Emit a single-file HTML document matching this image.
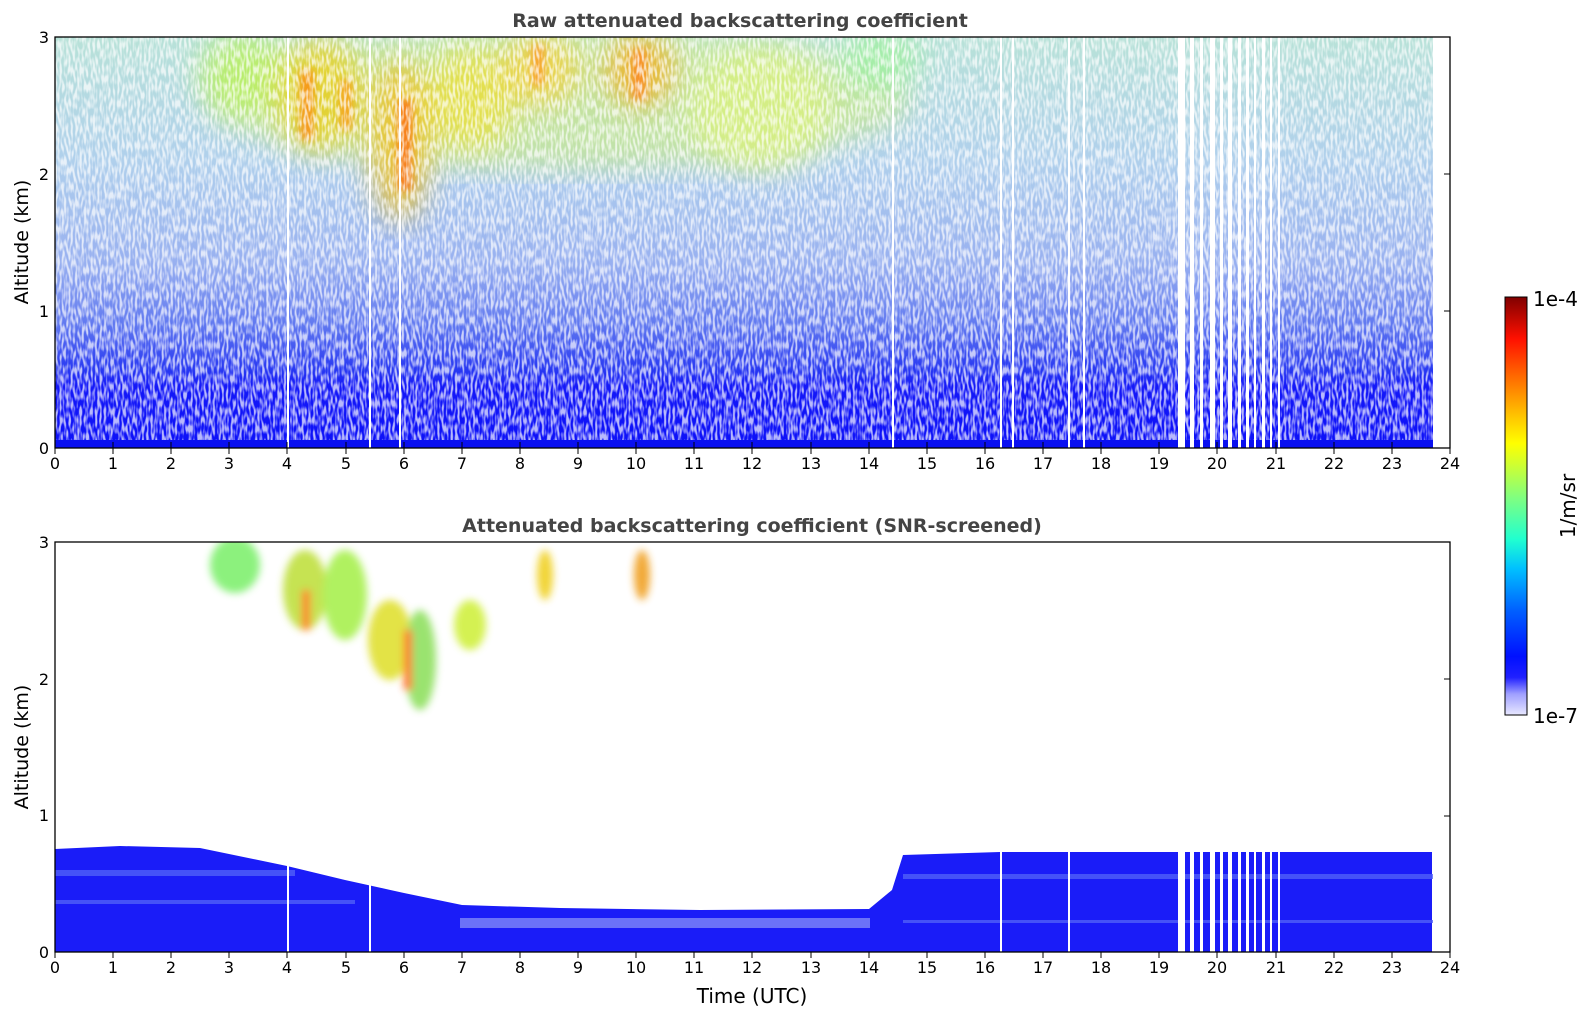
<!DOCTYPE html>
<html><head><meta charset="utf-8"><style>
html,body{margin:0;padding:0;background:#fff;}
svg{display:block;font-family:"DejaVu Sans","Liberation Sans",sans-serif;}
</style></head><body>
<svg width="1595" height="1020" viewBox="0 0 1595 1020" xmlns="http://www.w3.org/2000/svg">
<defs>
<linearGradient id="topbg" x1="0" y1="1" x2="0" y2="0">
<stop offset="0" stop-color="#0c10f8"/>
<stop offset="0.15" stop-color="#1418f8"/>
<stop offset="0.19" stop-color="#2838f2"/>
<stop offset="0.3" stop-color="#6078f0"/>
<stop offset="0.45" stop-color="#98b0f0"/>
<stop offset="0.7" stop-color="#b0d0ec"/>
<stop offset="1" stop-color="#b8e2d8"/>
</linearGradient>
<linearGradient id="cb" x1="0" y1="1" x2="0" y2="0">
<stop offset="0" stop-color="#e8e8ff"/>
<stop offset="0.05" stop-color="#a0a0ff"/>
<stop offset="0.09" stop-color="#2020ff"/>
<stop offset="0.14" stop-color="#0010ff"/>
<stop offset="0.25" stop-color="#0060ff"/>
<stop offset="0.35" stop-color="#00c0ff"/>
<stop offset="0.42" stop-color="#20ffd0"/>
<stop offset="0.52" stop-color="#80ff80"/>
<stop offset="0.6" stop-color="#d0ff30"/>
<stop offset="0.65" stop-color="#ffff00"/>
<stop offset="0.72" stop-color="#ffc000"/>
<stop offset="0.82" stop-color="#ff6000"/>
<stop offset="0.9" stop-color="#ff1000"/>
<stop offset="1" stop-color="#800000"/>
</linearGradient>
<filter id="blur"><feGaussianBlur stdDeviation="14"/></filter>
<filter id="blur2"><feGaussianBlur stdDeviation="4"/></filter>
<filter id="noise" x="0" y="0" width="100%" height="100%">
<feTurbulence type="fractalNoise" baseFrequency="0.45 0.12" numOctaves="1" seed="3"/>
<feColorMatrix type="matrix" values="0 0 0 0 1  0 0 0 0 1  0 0 0 0 1  4 0 0 0 -1.6"/>
</filter>
<clipPath id="ctop"><rect x="55" y="37" width="1378" height="411"/></clipPath>
<clipPath id="cbot"><rect x="55" y="542" width="1378" height="410"/></clipPath>
</defs>

<text x="740" y="27" text-anchor="middle" font-size="19" font-weight="bold" fill="#444">Raw attenuated backscattering coefficient</text>
<g clip-path="url(#ctop)">
<rect x="55" y="37" width="1378" height="411" fill="url(#topbg)"/>
<g filter="url(#blur)" opacity="0.75">
<ellipse cx="560" cy="100" rx="350" ry="70" fill="#c8e890"/>
</g>
<g filter="url(#blur)" opacity="0.85">
<ellipse cx="245" cy="75" rx="45" ry="40" fill="#b8f060"/>
<ellipse cx="320" cy="95" rx="45" ry="55" fill="#e8d020"/>
<ellipse cx="400" cy="140" rx="30" ry="80" fill="#f0c020"/>
<ellipse cx="470" cy="100" rx="45" ry="50" fill="#e8e040"/>
<ellipse cx="540" cy="70" rx="40" ry="35" fill="#f0d040"/>
<ellipse cx="640" cy="70" rx="35" ry="35" fill="#f0b020"/>
<ellipse cx="760" cy="110" rx="70" ry="60" fill="#d8f080"/>
<ellipse cx="880" cy="60" rx="40" ry="30" fill="#a0f0a0"/>
</g>
<g filter="url(#blur2)" opacity="0.7">
<rect x="300" y="70" width="14" height="70" fill="#ff8010"/>
<rect x="340" y="80" width="12" height="50" fill="#ff9010"/>
<rect x="398" y="100" width="14" height="90" fill="#ff6010"/>
<rect x="632" y="50" width="14" height="50" fill="#ff8020"/>
<rect x="532" y="45" width="12" height="40" fill="#ff9020"/>
</g>
<rect x="55" y="37" width="1378" height="411" filter="url(#noise)" opacity="0.7"/>
<rect x="55" y="440" width="1378" height="8" fill="#0a10f0"/>
<rect x="1433" y="37" width="20" height="411" fill="#fff"/>
<g fill="#fff">
<rect x="1178" y="37" width="7" height="411"/><rect x="1190" y="37" width="4" height="411"/>
<rect x="1200" y="37" width="3" height="411"/><rect x="1210" y="37" width="5" height="411"/>
<rect x="1220" y="37" width="3" height="411"/><rect x="1228" y="37" width="4" height="411"/>
<rect x="1238" y="37" width="3" height="411"/><rect x="1246" y="37" width="3" height="411"/>
<rect x="1254" y="37" width="2" height="411"/><rect x="1262" y="37" width="3" height="411"/>
<rect x="1270" y="37" width="2" height="411"/><rect x="1278" y="37" width="2" height="411"/>
<rect x="287" y="37" width="2" height="411"/><rect x="369" y="37" width="2" height="411"/>
<rect x="399" y="37" width="2" height="411"/><rect x="1000" y="37" width="2" height="411"/>
<rect x="1012" y="37" width="2" height="411"/><rect x="1068" y="37" width="2" height="411"/>
<rect x="1083" y="37" width="2" height="411"/><rect x="892" y="37" width="2" height="411"/>
</g>
</g>
<rect x="55" y="37" width="1395" height="411" fill="none" stroke="#000" stroke-width="1.3"/>

<text x="752" y="532" text-anchor="middle" font-size="19" font-weight="bold" fill="#444">Attenuated backscattering coefficient (SNR-screened)</text>
<g clip-path="url(#cbot)">
<polygon points="55,849 120,846 200,848 287,866 345,880 404,893 462,905 560,908 700,910 869,909 892,890 903,855 1000,852 1432,852 1432,952 55,952" fill="#1a1cf8"/>
<g fill="#5060f8" opacity="0.8">
<rect x="55" y="870" width="240" height="6"/><rect x="55" y="900" width="300" height="4"/>
<rect x="903" y="874" width="530" height="5"/><rect x="903" y="920" width="530" height="3"/>
<rect x="460" y="918" width="410" height="10" fill="#8088f8"/>
</g>
<g filter="url(#blur2)" opacity="0.9">
<ellipse cx="235" cy="565" rx="25" ry="28" fill="#80f070"/>
<ellipse cx="305" cy="590" rx="22" ry="40" fill="#c0e040"/>
<ellipse cx="345" cy="595" rx="22" ry="45" fill="#a8f050"/>
<ellipse cx="390" cy="640" rx="22" ry="40" fill="#e0e030"/>
<ellipse cx="420" cy="660" rx="16" ry="50" fill="#90e060"/>
<ellipse cx="470" cy="625" rx="16" ry="25" fill="#d0f040"/>
<ellipse cx="545" cy="575" rx="8" ry="25" fill="#f0d020"/>
<ellipse cx="642" cy="575" rx="8" ry="25" fill="#f0a020"/>
<rect x="302" y="590" width="8" height="40" fill="#ff7010"/>
<rect x="404" y="630" width="8" height="60" fill="#ff6010"/>
</g>
<g fill="#fff">
<rect x="1178" y="842" width="7" height="110"/><rect x="1190" y="842" width="4" height="110"/>
<rect x="1200" y="842" width="3" height="110"/><rect x="1210" y="842" width="5" height="110"/>
<rect x="1220" y="842" width="3" height="110"/><rect x="1228" y="842" width="4" height="110"/>
<rect x="1238" y="842" width="3" height="110"/><rect x="1246" y="842" width="3" height="110"/>
<rect x="1254" y="842" width="2" height="110"/><rect x="1262" y="842" width="3" height="110"/>
<rect x="1270" y="842" width="2" height="110"/><rect x="1278" y="842" width="2" height="110"/>
<rect x="287" y="842" width="2" height="110"/><rect x="369" y="842" width="2" height="110"/>
<rect x="1000" y="842" width="2" height="110"/><rect x="1068" y="842" width="2" height="110"/>
</g>
</g>
<rect x="55" y="542" width="1395" height="410" fill="none" stroke="#000" stroke-width="1.3"/>

<g font-size="16" fill="#000" text-anchor="middle">
<text x="55" y="469">0</text><text x="113" y="469">1</text><text x="171" y="469">2</text><text x="229" y="469">3</text><text x="287" y="469">4</text><text x="346" y="469">5</text><text x="404" y="469">6</text><text x="462" y="469">7</text><text x="520" y="469">8</text><text x="578" y="469">9</text><text x="636" y="469">10</text><text x="694" y="469">11</text><text x="752" y="469">12</text><text x="811" y="469">13</text><text x="869" y="469">14</text><text x="927" y="469">15</text><text x="985" y="469">16</text><text x="1043" y="469">17</text><text x="1101" y="469">18</text><text x="1159" y="469">19</text><text x="1217" y="469">20</text><text x="1276" y="469">21</text><text x="1334" y="469">22</text><text x="1392" y="469">23</text><text x="1450" y="469">24</text>
<text x="55" y="973">0</text><text x="113" y="973">1</text><text x="171" y="973">2</text><text x="229" y="973">3</text><text x="287" y="973">4</text><text x="346" y="973">5</text><text x="404" y="973">6</text><text x="462" y="973">7</text><text x="520" y="973">8</text><text x="578" y="973">9</text><text x="636" y="973">10</text><text x="694" y="973">11</text><text x="752" y="973">12</text><text x="811" y="973">13</text><text x="869" y="973">14</text><text x="927" y="973">15</text><text x="985" y="973">16</text><text x="1043" y="973">17</text><text x="1101" y="973">18</text><text x="1159" y="973">19</text><text x="1217" y="973">20</text><text x="1276" y="973">21</text><text x="1334" y="973">22</text><text x="1392" y="973">23</text><text x="1450" y="973">24</text>
</g>
<g font-size="16" text-anchor="end">
<text x="49" y="454">0</text><text x="49" y="317">1</text><text x="49" y="180">2</text><text x="49" y="43">3</text>
<text x="49" y="958">0</text><text x="49" y="821">1</text><text x="49" y="685">2</text><text x="49" y="548">3</text>
</g>
<g stroke="#000" stroke-width="1">
<path d="M113 448v-6M171 448v-6M229 448v-6M287 448v-6M346 448v-6M404 448v-6M462 448v-6M520 448v-6M578 448v-6M636 448v-6M694 448v-6M752 448v-6M811 448v-6M869 448v-6M927 448v-6M985 448v-6M1043 448v-6M1101 448v-6M1159 448v-6M1217 448v-6M1276 448v-6M1334 448v-6M1392 448v-6M55 448v6M113 448v6M171 448v6M229 448v6M287 448v6M346 448v6M404 448v6M462 448v6M520 448v6M578 448v6M636 448v6M694 448v6M752 448v6M811 448v6M869 448v6M927 448v6M985 448v6M1043 448v6M1101 448v6M1159 448v6M1217 448v6M1276 448v6M1334 448v6M1392 448v6M1450 448v6"/>
<path d="M113 952v6M171 952v6M229 952v6M287 952v6M346 952v6M404 952v6M462 952v6M520 952v6M578 952v6M636 952v6M694 952v6M752 952v6M811 952v6M869 952v6M927 952v6M985 952v6M1043 952v6M1101 952v6M1159 952v6M1217 952v6M1276 952v6M1334 952v6M1392 952v6M1450 952v6M55 952v6"/>
<path d="M1450 311h-6M1450 174h-6M1450 816h-6M1450 679h-6"/>
</g>
<text transform="translate(28 242) rotate(-90)" font-size="19" text-anchor="middle">Altitude (km)</text>
<text transform="translate(28 747) rotate(-90)" font-size="19" text-anchor="middle">Altitude (km)</text>
<text x="752" y="1003" font-size="20" text-anchor="middle">Time (UTC)</text>

<rect x="1505" y="297" width="22" height="418" fill="url(#cb)" stroke="#000" stroke-width="1"/>
<text x="1533" y="306" font-size="20">1e-4</text>
<text x="1533" y="723" font-size="20">1e-7</text>
<text transform="translate(1575 506) rotate(-90)" font-size="20" text-anchor="middle">1/m/sr</text>
</svg>
</body></html>
